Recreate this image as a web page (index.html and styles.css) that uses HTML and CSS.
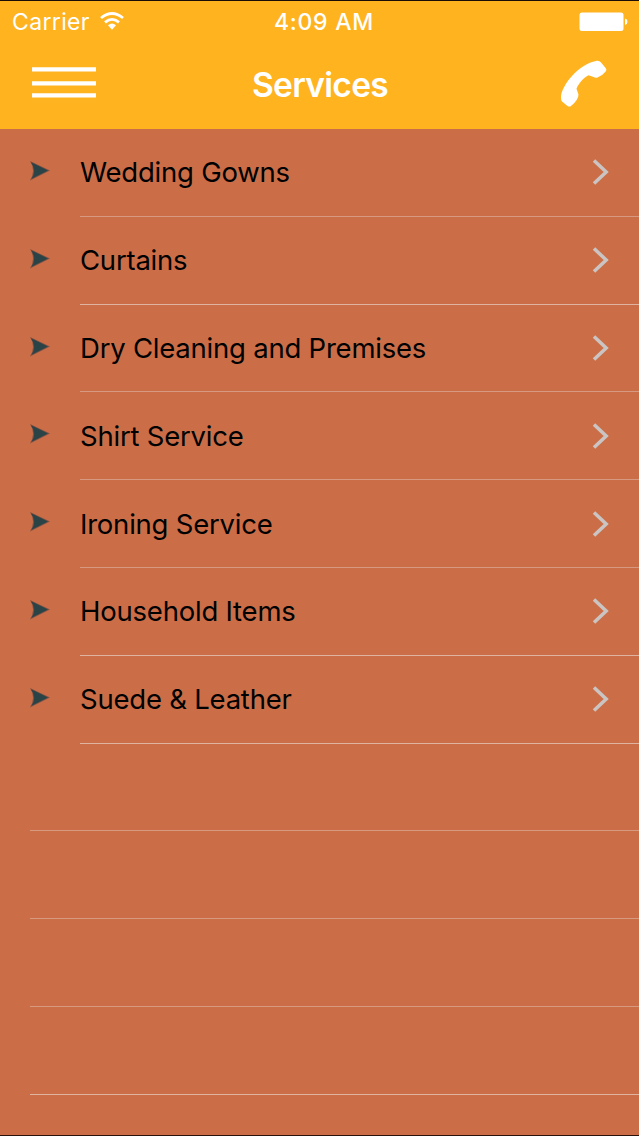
FILE: index.html
```html
<!DOCTYPE html>
<html lang="en">
<head>
    <meta charset="UTF-8">
    <meta name="viewport" content="width=device-width, initial-scale=1.0">
    <title>Services</title>
    <link rel="stylesheet" href="styles.css">
</head>
<body>

    <!-- Shared icons -->
    <svg class="icon-defs">
        <symbol id="icon-pointer" viewBox="0 0 22 22">
            <path d="M1 1 L21 10.5 L1 20.5 Q7 10.5 1 1 Z" fill="#7d5244"/>
            <path d="M2 2.2 L19 10.5 L2.5 18.8 Q8 10.5 2 2.2 Z" fill="#294347"/>
        </symbol>
        <symbol id="icon-chevron" viewBox="0 0 18 28">
            <path d="M2 2.5 L14.2 14 L2 25.5" fill="none" stroke="#cac5c3" stroke-width="3.5"/>
        </symbol>
    </svg>

    <div class="app-container">

        <header class="header">
            <!-- Status bar -->
            <div class="status-bar">
                <div class="carrier">
                    <span class="carrier-name">Carrier</span>
                    <svg class="wifi" viewBox="0 0 24 18">
                        <g fill="none" stroke="#fff" stroke-width="2.8">
                            <path d="M1 6 Q12 -3 23 6"/>
                            <path d="M5 10.3 Q12 4.5 19 10.3"/>
                        </g>
                        <path d="M8 13.2 Q12 9.8 16 13.2 L12 17.8 Z" fill="#fff"/>
                    </svg>
                </div>
                <span class="time">4:09 AM</span>
                <svg class="battery" viewBox="0 0 49 20">
                    <rect x="0.5" y="0.5" width="44" height="18.5" rx="2.5" fill="#fff"/>
                    <path d="M46 6.5 Q48.5 7 48.5 9.8 Q48.5 12.6 46 13 Z" fill="#fff"/>
                </svg>
            </div>

            <!-- Navigation bar -->
            <nav class="nav-bar">
                <svg class="menu" viewBox="0 0 64 32">
                    <path d="M0 3.4 H64 M0 17.4 H64 M0 29.4 H64" stroke="#fff" stroke-width="4.4"/>
                </svg>
                <h1>Services</h1>
                <svg class="phone" viewBox="0 0 48 48">
                    <path d="M36 1 C38 0.5 40 1.2 41.5 3 L46 8.5 Q47 10 45.5 11.8 Q42 16 37.5 17.5 Q35.5 18.3 33.5 17 L28.5 15.3 C24 17.5 18.5 23.5 16.5 28.8 L18.5 34.5 Q18.5 40 11 46 Q9.5 47 7.5 46 L2 41.5 Q1 40.5 1 37.5 C1 25 20 3.5 36 1 Z" fill="#fff"/>
                </svg>
            </nav>
        </header>

        <!-- Services list -->
        <ul class="service-list">
            <li>
                <svg class="pointer"><use href="#icon-pointer"/></svg>
                <div class="row soft"><span>Wedding Gowns</span><svg class="chevron"><use href="#icon-chevron"/></svg></div>
            </li>
            <li>
                <svg class="pointer"><use href="#icon-pointer"/></svg>
                <div class="row"><span>Curtains</span><svg class="chevron"><use href="#icon-chevron"/></svg></div>
            </li>
            <li>
                <svg class="pointer"><use href="#icon-pointer"/></svg>
                <div class="row soft"><span>Dry Cleaning and Premises</span><svg class="chevron"><use href="#icon-chevron"/></svg></div>
            </li>
            <li>
                <svg class="pointer"><use href="#icon-pointer"/></svg>
                <div class="row soft"><span>Shirt Service</span><svg class="chevron"><use href="#icon-chevron"/></svg></div>
            </li>
            <li>
                <svg class="pointer"><use href="#icon-pointer"/></svg>
                <div class="row soft"><span>Ironing Service</span><svg class="chevron"><use href="#icon-chevron"/></svg></div>
            </li>
            <li>
                <svg class="pointer"><use href="#icon-pointer"/></svg>
                <div class="row"><span>Household Items</span><svg class="chevron"><use href="#icon-chevron"/></svg></div>
            </li>
            <li>
                <svg class="pointer"><use href="#icon-pointer"/></svg>
                <div class="row"><span>Suede &amp; Leather</span><svg class="chevron"><use href="#icon-chevron"/></svg></div>
            </li>
            <!-- Empty rows -->
            <li><div class="row soft"></div></li>
            <li><div class="row soft"></div></li>
            <li><div class="row soft"></div></li>
            <li><div class="row"></div></li>
        </ul>

    </div>

</body>
</html>
```
FILE: styles.css
```css
/* Basic Reset and Global Styles */
* {
    box-sizing: border-box;
    margin: 0;
    padding: 0;
}

body {
    font-family: Inter, 'Liberation Sans', sans-serif;
    background-color: #cb6e48;
    color: #000000;
}

svg {
    display: block;
    flex-shrink: 0;
}

.icon-defs {
    display: none;
}

/* App Container */
.app-container {
    width: 100%;
    height: 1136px;
    overflow: hidden;
    border-top: 1px solid #1a0d05;
    border-bottom: 1px solid #2a120b;
}

/* Header */
.header {
    height: 128px;
    background-color: #ffb31f;
    color: #FFFFFF;
}

.status-bar {
    height: 40px;
    padding: 2px 11px 0 12px;
    display: grid;
    grid-template-columns: 1fr auto 1fr;
    align-items: center;
    font-size: 23px;
    line-height: 38px;
}

.carrier {
    display: flex;
    align-items: center;
    gap: 10px;
}

.carrier-name {
    letter-spacing: 0.35px;
}

.wifi {
    width: 24px;
    height: 18px;
    margin-top: -2px;
}

.time {
    font-weight: 500;
    letter-spacing: 0.75px;
    padding-left: 8px;
}

.battery {
    width: 49px;
    height: 20px;
    justify-self: end;
}

/* Navigation Bar */
.nav-bar {
    height: 88px;
    padding: 0 31px 0 32px;
    display: grid;
    grid-template-columns: 1fr auto 1fr;
    align-items: center;
}

.menu {
    width: 64px;
    height: 32px;
    margin-top: -6px;
}

.nav-bar h1 {
    font-size: 33.5px;
    font-weight: 600;
    line-height: 44px;
    letter-spacing: -0.7px;
}

.phone {
    width: 48px;
    height: 48px;
    justify-self: end;
    margin-top: -2px;
}

/* Services List */
.service-list {
    list-style: none;
}

.service-list li {
    height: 87.8px;
    padding-left: 30px;
    display: flex;
}

.pointer {
    width: 22px;
    height: 22px;
    margin: 31px 28px 0 -1px;
}

.pointer + .row {
    margin-left: 1px;
}

.row {
    flex: 1;
    padding-right: 29px;
    display: flex;
    justify-content: space-between;
    align-items: center;
    border-bottom: 1px solid #dfb5a2;
    font-size: 27.5px;
    letter-spacing: -0.22px;
}

.row.soft {
    border-bottom-color: #d79a80;
}

.chevron {
    width: 18px;
    height: 28px;
}
```
